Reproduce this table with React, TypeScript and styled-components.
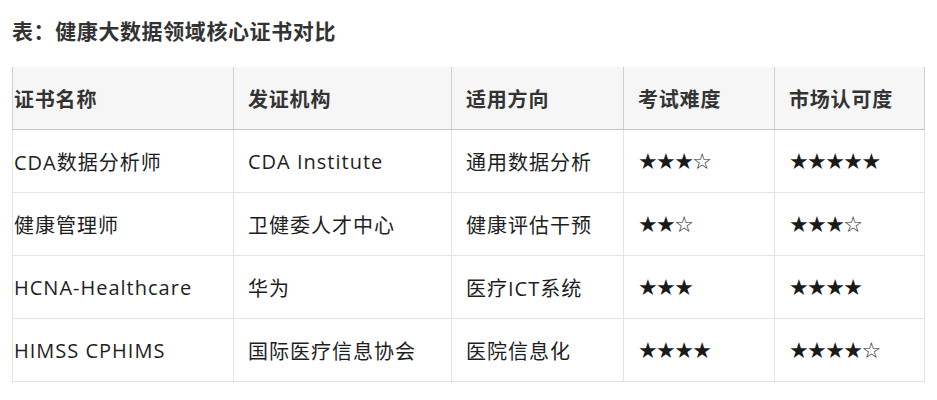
import React from 'react';
import styled, { createGlobalStyle } from 'styled-components';

const GlobalStyle = createGlobalStyle`
  html, body {
    margin: 0;
    padding: 0;
    background: #fff;
  }
`;

const Page = styled.div`
  padding: 0 12px;
  font-family: "Open Sans", "Noto Sans CJK SC", sans-serif;
  color: #222;
`;

const Title = styled.h3`
  margin: 16px 0 21px;
  font-size: 21px;
  line-height: 30px;
  font-weight: 700;
  letter-spacing: 0.6px;
  color: #333;
`;

const Table = styled.table`
  width: 100%;
  table-layout: fixed;
  border-collapse: collapse;
  border-spacing: 0;
  font-size: 20px;
  letter-spacing: 1px;
`;

const HeadCell = styled.th<{ $first?: boolean }>`
  height: 62px;
  padding: 0 0 0 ${(p) => (p.$first ? '1px' : '14px')};
  text-align: left;
  font-weight: 700;
  letter-spacing: 0.8px;
  color: #333;
  background: #f6f6f6;
  border-left: 1px solid #cfcfcf;
  border-right: 1px solid #cfcfcf;
  border-bottom: 1px solid #c4c4c4;
  white-space: nowrap;
`;

const Cell = styled.td<{ $first?: boolean }>`
  height: 62px;
  padding: 0 0 0 ${(p) => (p.$first ? '1px' : '14px')};
  border: 1px solid #e3e3e3;
  border-top: none;
  color: #1e1e1e;
  white-space: nowrap;
`;

const Stars = styled.span`
  font-family: "DejaVu Sans", sans-serif;
  font-size: 22px;
  line-height: 1;
  letter-spacing: -1.6px;
  color: #1a1a1a;
`;

type Row = {
  name: string;
  issuer: string;
  field: string;
  difficulty: string;
  recognition: string;
};

const rows: Row[] = [
  { name: 'CDA数据分析师', issuer: 'CDA Institute', field: '通用数据分析', difficulty: '★★★☆', recognition: '★★★★★' },
  { name: '健康管理师', issuer: '卫健委人才中心', field: '健康评估干预', difficulty: '★★☆', recognition: '★★★☆' },
  { name: 'HCNA-Healthcare', issuer: '华为', field: '医疗ICT系统', difficulty: '★★★', recognition: '★★★★' },
  { name: 'HIMSS CPHIMS', issuer: '国际医疗信息协会', field: '医院信息化', difficulty: '★★★★', recognition: '★★★★☆' },
];

const headers = ['证书名称', '发证机构', '适用方向', '考试难度', '市场认可度'];
const widths = [221, 218, 172, 151, 150];

export default function App() {
  return (
    <Page>
      <GlobalStyle />
      <Title>表：健康大数据领域核心证书对比</Title>
      <Table>
        <colgroup>
          {widths.map((w, i) => (
            <col key={i} style={{ width: w }} />
          ))}
        </colgroup>
        <thead>
          <tr>
            {headers.map((h, i) => (
              <HeadCell key={h} $first={i === 0}>{h}</HeadCell>
            ))}
          </tr>
        </thead>
        <tbody>
          {rows.map((r) => (
            <tr key={r.name}>
              <Cell $first>{r.name}</Cell>
              <Cell>{r.issuer}</Cell>
              <Cell>{r.field}</Cell>
              <Cell><Stars>{r.difficulty}</Stars></Cell>
              <Cell><Stars>{r.recognition}</Stars></Cell>
            </tr>
          ))}
        </tbody>
      </Table>
    </Page>
  );
}
